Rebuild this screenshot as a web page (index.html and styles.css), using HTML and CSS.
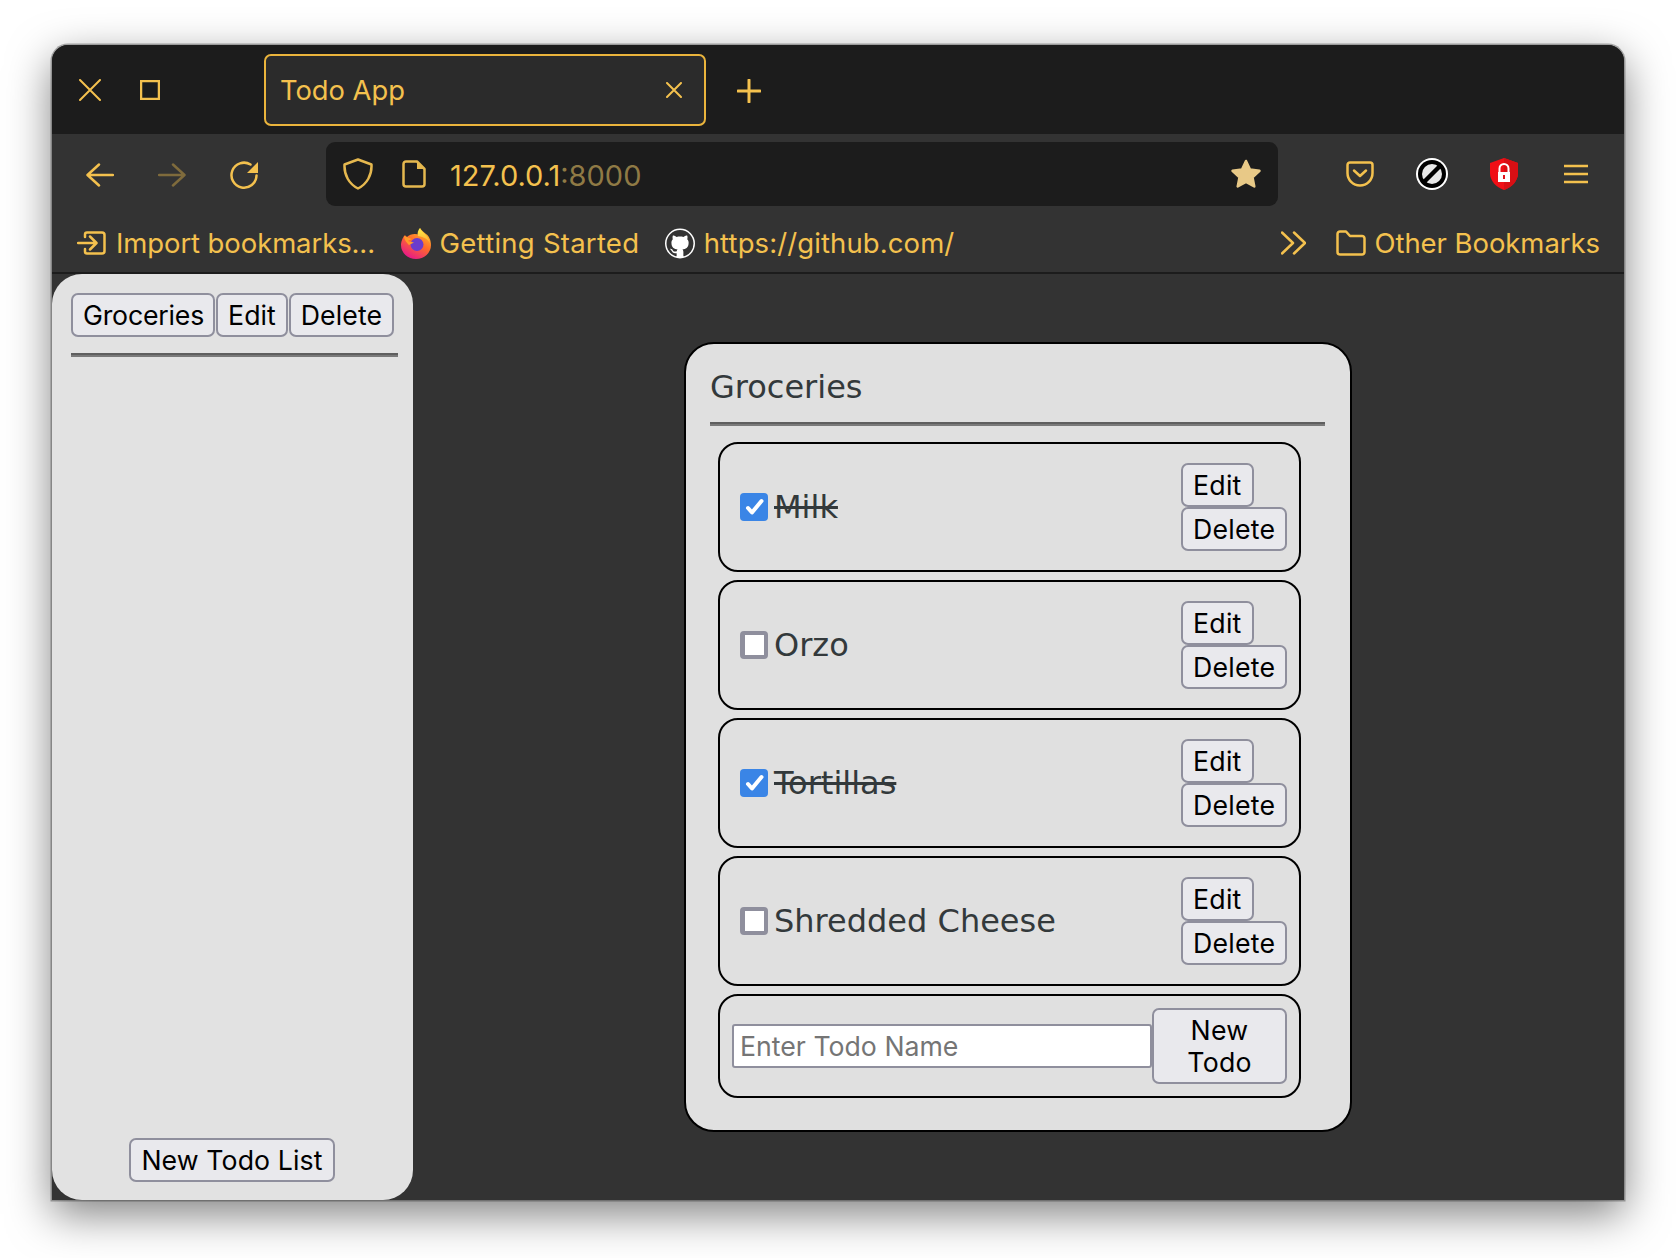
FILE: index.html
```html
<!DOCTYPE html>
<html lang="en">
<head>
    <meta charset="UTF-8">
    <meta name="viewport" content="width=device-width, initial-scale=1.0">
    <title>Todo App</title>
    <link rel="stylesheet" href="styles.css">
</head>
<body>
    <div class="window">
        <div class="titlebar">
            <svg class="win-close" viewBox="0 0 22 22"><path d="M1 1 21 21M21 1 1 21"/></svg>
            <svg class="win-max" viewBox="0 0 20 20"><rect x="1" y="1" width="18" height="18"/></svg>
            <div class="tab">
                <span class="tab-title">Todo App</span>
                <svg class="tab-close" viewBox="0 0 16 16"><path d="M1 1 15 15M15 1 1 15"/></svg>
            </div>
            <svg class="tab-new" viewBox="0 0 24 24"><path d="M12 1V23M1 12H23"/></svg>
        </div>

        <div class="navbar">
            <svg class="nav-icon" viewBox="0 0 28 24"><path d="M27 12H2M13 1.500 1.500 12 13 22.500"/></svg>
            <svg class="nav-icon dim" viewBox="0 0 28 24"><path d="M1 12H26M15 1.500 26.500 12 15 22.500"/></svg>
            <svg class="nav-icon" viewBox="0 0 28 28"><path d="M26.500 14.500A12.500 12.500 0 1 1 20.500 3.500"/><path class="solid" d="M28 1V12H17Z"/></svg>
            <div class="urlbar">
                <svg class="url-shield" viewBox="0 0 30 32"><path d="M15 1.500 28.500 6.500C29 17 24 26 15 30.500 6 26 1 17 1.500 6.500Z"/></svg>
                <svg class="url-page" viewBox="0 0 24 28"><path d="M4 1.500H15L22.500 9V24A2.500 2.500 0 0 1 20 26.500H4A2.500 2.500 0 0 1 1.500 24V4A2.500 2.500 0 0 1 4 1.500Z"/><path class="solid" d="M15 1.500 22.500 9H15Z"/></svg>
                <span class="url-text">127.0.0.1<span class="url-port">:8000</span></span>
                <svg class="url-star" viewBox="0 0 32 32"><path d="M16 3 20 11.500 29.500 12.800 22.500 19.300 24.300 28.500 16 24 7.700 28.500 9.500 19.300 2.500 12.800 12 11.500Z"/></svg>
            </div>
            <svg class="tool-pocket" viewBox="0 0 28 26"><path d="M4 1.500H24A2.500 2.500 0 0 1 26.500 4V12C26.500 19 21 24.500 14 24.500S1.500 19 1.500 12V4A2.500 2.500 0 0 1 4 1.500Z"/><path d="M8 9.500 14 15 20 9.500"/></svg>
            <svg class="tool-block" viewBox="0 0 32 32">
                <circle cx="16" cy="16" r="16" fill="#fff"/>
                <circle cx="16" cy="16" r="14" fill="#000"/>
                <circle cx="16" cy="16" r="10" fill="#e8e8e8"/>
                <path d="M8 24 24 8" stroke="#000" stroke-width="4.500"/>
            </svg>
            <svg class="tool-shield" viewBox="0 0 28 32">
                <path d="M14 0 28 5V15C28 23 22 29 14 32 6 29 0 23 0 15V5Z" fill="#f00f16"/>
                <path d="M14 0 28 5V15C28 23 22 29 14 32Z" fill="#d80f14"/>
                <path d="M9.500 14V10.500A4.500 4.500 0 0 1 18.500 10.500V14" fill="none" stroke="#fff" stroke-width="2"/>
                <rect x="8" y="14" width="12" height="10" fill="#fff"/>
                <rect x="13" y="17" width="2" height="4" fill="#e01018"/>
            </svg>
            <svg class="tool-menu" viewBox="0 0 24 20"><path d="M0 2H24M0 10H24M0 18H24"/></svg>
        </div>

        <div class="bookmarks">
            <div class="bookmark">
                <svg class="bm-import" viewBox="0 0 29 24"><path d="M8 6V3.500A2 2 0 0 1 10 1.500H25A2.500 2.500 0 0 1 27.500 4V20A2.500 2.500 0 0 1 25 22.500H10A2 2 0 0 1 8 20.500V18M1 12H19M13 5.500 19.500 12 13 18.500"/></svg>
                <span class="bm-tight">Import bookmarks...</span>
            </div>
            <div class="bookmark">
                <svg class="bm-favicon" viewBox="0 0 30 31">
                    <defs>
                        <linearGradient id="foxBody" x1="0.800" y1="0.100" x2="0.300" y2="1">
                            <stop offset="0" stop-color="#ffb52e"/>
                            <stop offset="0.450" stop-color="#ff6a2a"/>
                            <stop offset="1" stop-color="#e5168c"/>
                        </linearGradient>
                        <linearGradient id="foxFlame" x1="0.500" y1="0" x2="0.500" y2="1">
                            <stop offset="0" stop-color="#fff04a"/>
                            <stop offset="1" stop-color="#ffa62e"/>
                        </linearGradient>
                    </defs>
                    <path d="M3 8C0.500 12 0 15 0 17A15 14 0 0 0 30 17C30 12 28 8 25 6 23 4 21 3 19 0 18 3 18.500 5 19 7 14 5 9 6 6 9 5 8 4 7 3 8Z" fill="url(#foxBody)"/>
                    <path d="M19 0C20 4 27 6 29.500 16 27 11 23 9 17 8 16 5 17 2 19 0Z" fill="url(#foxFlame)"/>
                    <circle cx="16" cy="16.500" r="6.500" fill="#6b3ccc"/>
                    <path d="M3 8 11 11 7 13 13 14.500 8 17C6 15 3 12 3 8Z" fill="#ff9a2a"/>
                </svg>
                <span class="bm-wide">Getting Started</span>
            </div>
            <div class="bookmark">
                <svg class="bm-favicon" viewBox="0 0 16 16">
                    <circle cx="8" cy="8" r="8" fill="#fff"/>
                    <path transform="translate(0.800 0.800) scale(0.900)" fill="#333" d="M8 0C3.580 0 0 3.580 0 8c0 3.540 2.290 6.530 5.470 7.590.4.070.55-.17.55-.38 0-.19-.01-.82-.01-1.490-2.010.37-2.530-.49-2.690-.94-.09-.23-.48-.94-.82-1.130-.28-.15-.68-.52-.01-.53.63-.01 1.080.58 1.230.82.72 1.210 1.870.87 2.330.66.07-.52.28-.87.51-1.070-1.780-.2-3.640-.89-3.640-3.950 0-.87.31-1.590.82-2.150-.08-.2-.36-1.020.08-2.120 0 0 .67-.21 2.200.82.64-.18 1.320-.27 2-.27.68 0 1.360.09 2 .27 1.530-1.040 2.200-.82 2.200-.82.44 1.100.16 1.920.08 2.120.51.56.82 1.270.82 2.150 0 3.070-1.870 3.750-3.650 3.950.29.25.54.73.54 1.480 0 1.070-.01 1.930-.01 2.200 0 .21.15.46.55.38A8.013 8.013 0 0016 8c0-4.420-3.580-8-8-8z"/>
                </svg>
                <span class="bm-link">https://github.com/</span>
            </div>
            <div class="bookmarks-right">
                <svg class="bm-more" viewBox="0 0 25 24"><path d="M1 1.500 12 12 1 22.500M13 1.500 24 12 13 22.500"/></svg>
                <div class="bookmark">
                    <svg class="bm-folder" viewBox="0 0 30 26"><path d="M1.500 4A2.500 2.500 0 0 1 4 1.500H10L14 6H26A2.500 2.500 0 0 1 28.500 8.500V22A2.500 2.500 0 0 1 26 24.500H4A2.500 2.500 0 0 1 1.500 22Z"/></svg>
                    <span class="bm-other">Other Bookmarks</span>
                </div>
            </div>
        </div>

        <div class="app">
            <aside class="sidebar">
                <div>
                    <div class="list-row">
                        <button class="btn list-name">Groceries</button>
                        <button class="btn">Edit</button>
                        <button class="btn list-delete">Delete</button>
                    </div>
                    <hr class="rule sidebar-rule">
                </div>
                <button class="btn new-list">New Todo List</button>
            </aside>

            <main class="content">
                <div class="card">
                    <h2 class="card-title">Groceries</h2>
                    <hr class="rule card-rule">
                    <div class="todos">
                        <div class="todo">
                            <span class="check checked"><svg viewBox="0 0 28 28"><path d="M8 15 12 19.500 21.500 8"/></svg></span>
                            <span class="todo-name done">Milk</span>
                            <div class="todo-actions">
                                <button class="btn">Edit</button>
                                <button class="btn">Delete</button>
                            </div>
                        </div>
                        <div class="todo">
                            <span class="check"></span>
                            <span class="todo-name">Orzo</span>
                            <div class="todo-actions">
                                <button class="btn">Edit</button>
                                <button class="btn">Delete</button>
                            </div>
                        </div>
                        <div class="todo">
                            <span class="check checked"><svg viewBox="0 0 28 28"><path d="M8 15 12 19.500 21.500 8"/></svg></span>
                            <span class="todo-name done">Tortillas</span>
                            <div class="todo-actions">
                                <button class="btn">Edit</button>
                                <button class="btn">Delete</button>
                            </div>
                        </div>
                        <div class="todo">
                            <span class="check"></span>
                            <span class="todo-name">Shredded Cheese</span>
                            <div class="todo-actions">
                                <button class="btn">Edit</button>
                                <button class="btn">Delete</button>
                            </div>
                        </div>
                        <form class="todo-form" onsubmit="return false">
                            <input class="todo-input" type="text" placeholder="Enter Todo Name">
                            <button class="btn new-todo">New Todo</button>
                        </form>
                    </div>
                </div>
            </main>
        </div>
    </div>
</body>
</html>
```

FILE: styles.css
```css
* {
    box-sizing: border-box;
}
body {
    margin: 0;
    padding: 45px 52px 58px;
    height: 1258px;
    background: #fff;
    overflow: hidden;
    font-family: Inter, "Liberation Sans", sans-serif;
}
svg {
    display: block;
    flex: none;
    fill: none;
    stroke: #f4c14e;
    stroke-width: 2.5;
    stroke-linecap: round;
    stroke-linejoin: round;
}
svg .solid {
    fill: #f4c14e;
    stroke: none;
}
.window {
    display: flex;
    flex-direction: column;
    width: 1572px;
    height: 1155px;
    border-radius: 16px 16px 0 0;
    background: #333;
    box-shadow: 0 0 0 1.500px rgba(0, 0, 0, 0.3), 0 14px 44px rgba(0, 0, 0, 0.5);
    overflow: hidden;
}

/* browser chrome */
.titlebar {
    display: flex;
    align-items: center;
    flex: none;
    height: 89px;
    padding-left: 27px;
    background: #1c1c1c;
}
.win-close {
    width: 22px;
    height: 22px;
    stroke-width: 2;
}
.win-max {
    width: 20px;
    height: 20px;
    margin-left: 39px;
    stroke-linecap: butt;
    stroke-linejoin: miter;
}
.tab {
    display: flex;
    align-items: center;
    justify-content: space-between;
    width: 442px;
    height: 72px;
    margin-left: 104px;
    padding: 0 22px 0 14px;
    background: #2b2b2b;
    border: 2px solid #eab43c;
    border-radius: 7px;
}
.tab-title {
    padding-top: 2px;
    font-size: 27.300px;
    color: #f4c14e;
}
.tab-close {
    width: 16px;
    height: 16px;
    stroke-width: 2;
}
.tab-new {
    width: 24px;
    height: 24px;
    margin: 2px 0 0 31px;
    stroke-width: 3;
}
.navbar {
    display: flex;
    align-items: center;
    flex: none;
    height: 80px;
    padding-left: 34px;
}
.nav-icon {
    width: 28px;
    margin: 2px 44px 0 0;
}
.nav-icon.dim {
    stroke: #7f6b3c;
}
.urlbar {
    display: flex;
    align-items: center;
    width: 952px;
    height: 64px;
    margin-left: 24px;
    padding: 0 16px 0 17px;
    background: #1c1c1c;
    border-radius: 9px;
}
.url-shield {
    width: 30px;
    height: 32px;
    stroke: #e5b84f;
}
.url-page {
    width: 24px;
    height: 28px;
    margin-left: 29px;
    stroke: #e5b84f;
}
.url-page .solid {
    fill: #e5b84f;
}
.url-text {
    margin-left: 24px;
    padding-top: 2px;
    font-size: 29px;
    color: #f4c14e;
}
.url-port {
    color: #8f7a45;
}
.url-star {
    width: 32px;
    height: 32px;
    margin-left: auto;
    fill: #e8c987;
    stroke: #e8c987;
}
.tool-pocket {
    width: 28px;
    height: 26px;
    margin-left: 68px;
}
.tool-block {
    width: 32px;
    height: 32px;
    margin-left: 42px;
    stroke: none;
}
.tool-shield {
    width: 28px;
    height: 32px;
    margin-left: 42px;
    stroke: none;
}
.tool-menu {
    width: 24px;
    height: 20px;
    margin-left: 46px;
}
.bookmarks {
    display: flex;
    align-items: center;
    gap: 25.500px;
    flex: none;
    height: 58px;
    padding: 0 24px 0 25px;
    font-size: 27.500px;
    color: #f4c14e;
}
.bookmark {
    display: flex;
    align-items: center;
    gap: 9px;
}
.bm-tight {
    letter-spacing: -0.1px;
}
.bm-wide {
    letter-spacing: 0.25px;
}
.bm-link {
    letter-spacing: 0.1px;
}
.bm-other {
    letter-spacing: -0.06px;
}
.bm-import {
    width: 29px;
    height: 24px;
    margin-right: 1px;
}
.bm-favicon {
    width: 30px;
    height: 31px;
    stroke: none;
}
.bm-more {
    width: 25px;
    height: 24px;
}
.bm-folder {
    width: 30px;
    height: 26px;
}
.bookmarks-right {
    display: flex;
    align-items: center;
    gap: 30px;
    margin-left: auto;
}

/* todo app */
.app {
    display: flex;
    flex: 1;
    min-height: 0;
    border-top: 2px solid #1c1c1c;
}
.btn {
    padding: 4px 10px;
    font-family: Inter, "Liberation Sans", sans-serif;
    font-size: 26.700px;
    letter-spacing: 0.25px;
    line-height: 32px;
    color: #000;
    background: #e9e9ed;
    border: 2px solid #8f8f9d;
    border-radius: 7px;
}
.rule {
    height: 4px;
    margin: 0;
    border: 0;
    border-top: 2px solid #5f5f5f;
    border-bottom: 2px solid #7a7a7a;
}
.sidebar {
    display: flex;
    flex-direction: column;
    justify-content: space-between;
    flex: none;
    width: 361px;
    padding: 19px 15px 18px 19px;
    background: #e2e2e2;
    border-radius: 30px;
}
.list-row {
    display: flex;
    gap: 1px;
}
.list-row .btn {
    letter-spacing: 0;
}
.list-row .list-name {
    padding-right: 9px;
    letter-spacing: -0.2px;
}
.list-row .list-delete {
    letter-spacing: 0.1px;
}
.sidebar-rule {
    margin-top: 16px;
}
.new-list {
    align-self: center;
    margin-right: 5px;
    letter-spacing: 0.1px;
}
.content {
    display: flex;
    justify-content: center;
    align-items: flex-start;
    flex: 1;
    padding: 68px 1px 0 0;
}
.card {
    width: 668px;
    height: 790px;
    padding: 24px 25px 32px 24px;
    background: #e0e0e0;
    border: 2px solid #000;
    border-radius: 30px;
}
.card-title {
    margin: 0;
    font-family: "DejaVu Sans", sans-serif;
    font-size: 32px;
    font-weight: 400;
    line-height: 38px;
    color: #33393b;
}
.card-rule {
    margin-top: 16px;
}
.todos {
    display: flex;
    flex-direction: column;
    gap: 8px;
    width: 583px;
    margin: 16px 0 0 8px;
}
.todo {
    display: flex;
    align-items: center;
    height: 130px;
    padding: 0 12px 0 20px;
    border: 2px solid #000;
    border-radius: 20px;
}
.check {
    flex: none;
    width: 28px;
    height: 28px;
    background: #fff;
    border: solid #8f8f9d;
    border-width: 4px 4px 4px 5px;
    border-radius: 4px;
}
.check.checked {
    background: #3a85e6;
    border: 0;
}
.check svg {
    width: 28px;
    height: 28px;
    stroke: #fff;
    stroke-width: 4;
}
.todo-name {
    margin-left: 6px;
    font-family: "DejaVu Sans", sans-serif;
    font-size: 32px;
    color: #33393b;
}
.todo-name.done {
    text-decoration: line-through;
}
.todo-actions {
    display: flex;
    flex-direction: column;
    align-items: flex-start;
    width: 106px;
    margin-left: auto;
}
.todo-form {
    display: flex;
    align-items: center;
    height: 104px;
    margin: 0;
    padding: 0 12px;
    border: 2px solid #000;
    border-radius: 20px;
}
.todo-input {
    flex: 1;
    min-width: 0;
    height: 44px;
    padding: 0 6px;
    font-family: Inter, "Liberation Sans", sans-serif;
    font-size: 26.700px;
    background: #fff;
    border: 2px solid #8f8f9d;
    border-radius: 3px;
}
.todo-input::placeholder {
    color: #757575;
}
.new-todo {
    flex: none;
    width: 135px;
}
```
